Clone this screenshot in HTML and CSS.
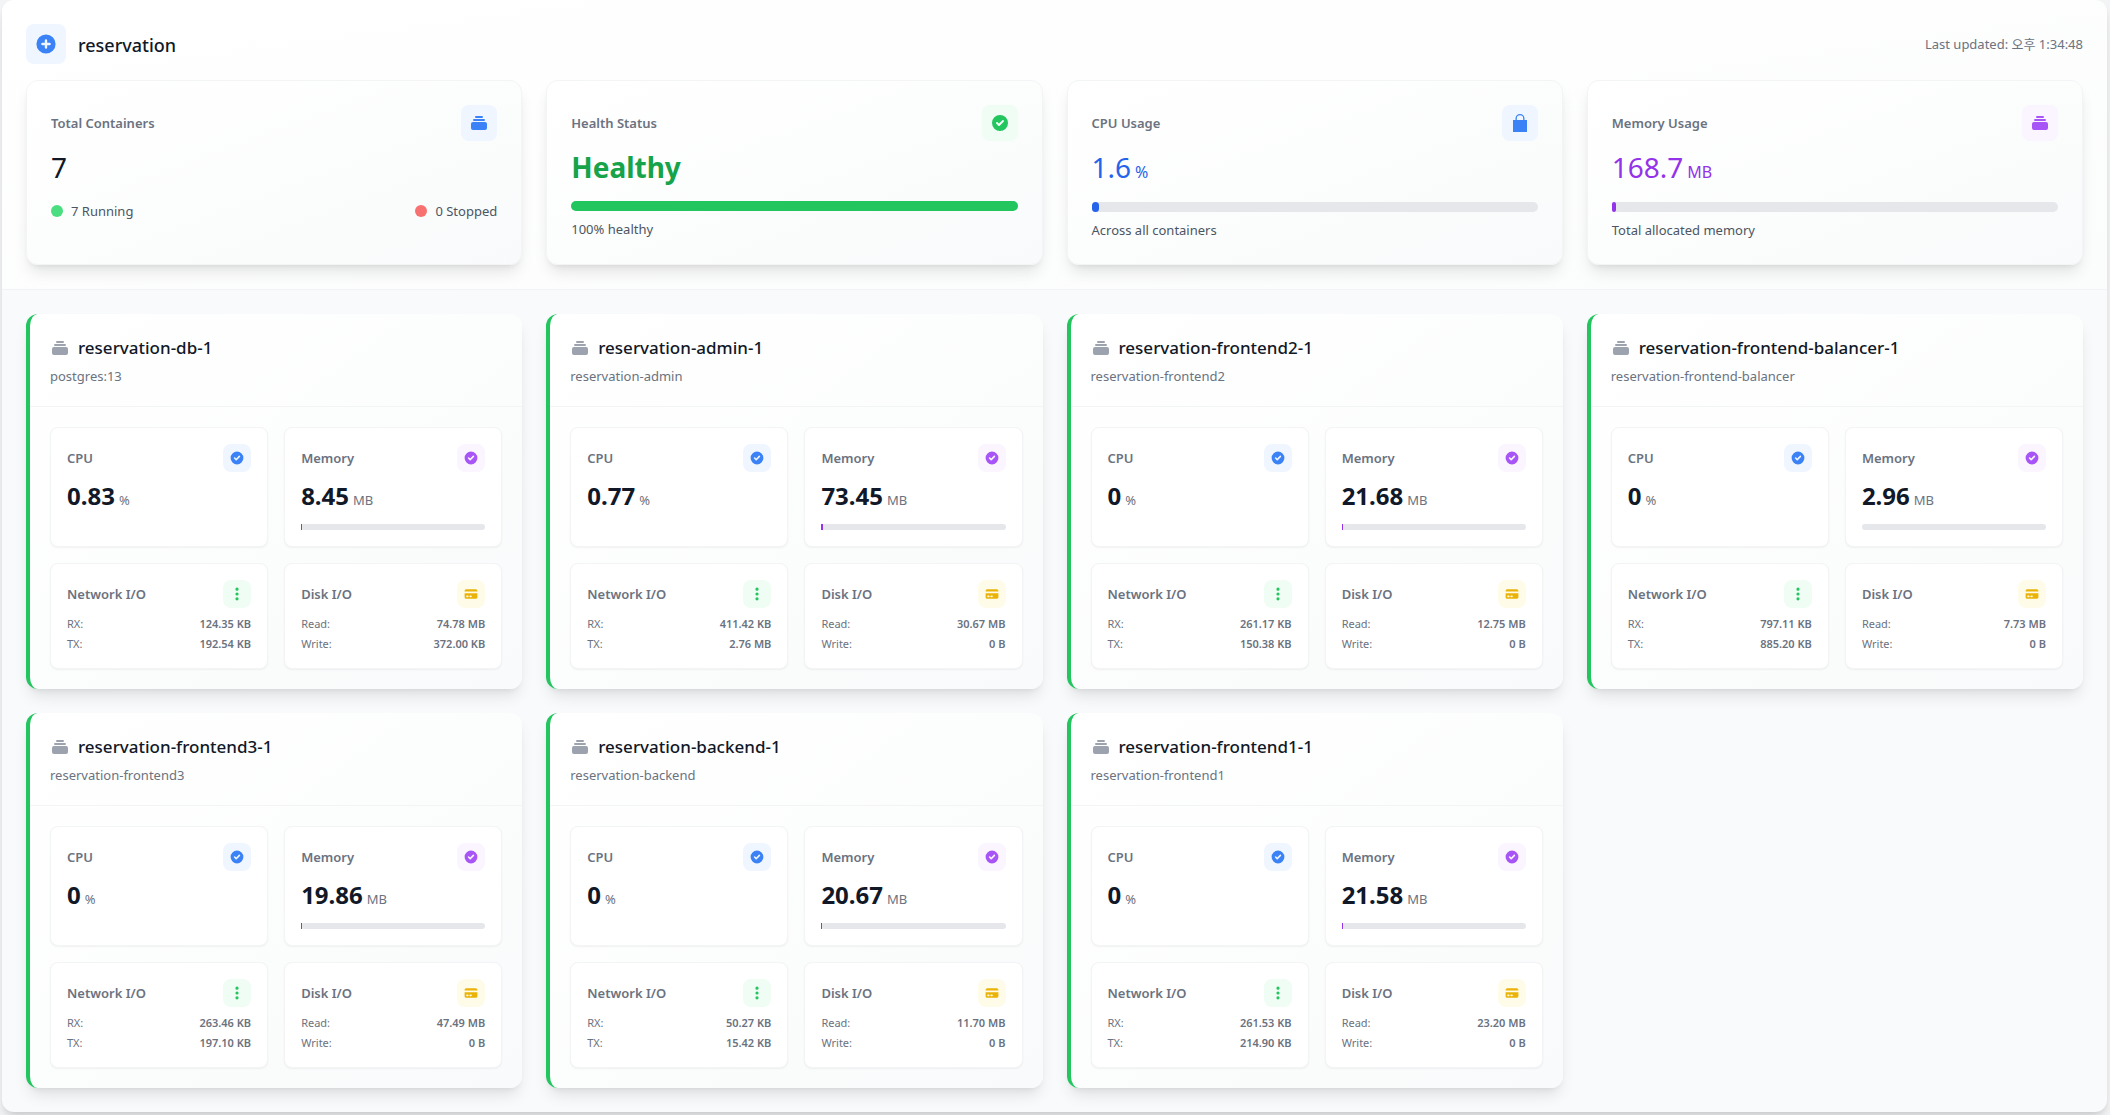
FILE: index.html
```html
<!DOCTYPE html>
<html lang="en">
<head>
<meta charset="utf-8">
<title>reservation</title>
<link rel="stylesheet" href="styles.css">
</head>
<body>
<svg class="sprite" aria-hidden="true">
  <symbol id="i-stack" viewBox="0 0 20 20"><path d="M7 3a1 1 0 000 2h6a1 1 0 100-2H7zM4 7a1 1 0 011-1h10a1 1 0 110 2H5a1 1 0 01-1-1zM2 11a2 2 0 012-2h12a2 2 0 012 2v4a2 2 0 01-2 2H4a2 2 0 01-2-2v-4z"/></symbol>
  <symbol id="i-check" viewBox="0 0 20 20"><path fill-rule="evenodd" d="M10 18a8 8 0 100-16 8 8 0 000 16zm3.707-9.293a1 1 0 00-1.414-1.414L9 10.586 7.707 9.293a1 1 0 00-1.414 1.414l2 2a1 1 0 001.414 0l4-4z"/></symbol>
  <symbol id="i-plus" viewBox="0 0 20 20"><path fill-rule="evenodd" d="M10 18a8 8 0 100-16 8 8 0 000 16zm1-11a1 1 0 10-2 0v2H7a1 1 0 100 2h2v2a1 1 0 102 0v-2h2a1 1 0 100-2h-2V7z"/></symbol>
  <symbol id="i-bag" viewBox="0 0 20 20"><path fill-rule="evenodd" d="M10 1a4.5 4.5 0 00-4.500 4.500V7H3v12h14V7h-2.500V5.500A4.500 4.500 0 0010 1zm3.200 6V5.500a3.200 3.200 0 00-6.400 0V7h6.400z"/></symbol>
  <symbol id="i-dots" viewBox="0 0 20 20"><path d="M10 6a2 2 0 110-4 2 2 0 010 4zM10 12a2 2 0 110-4 2 2 0 010 4zM10 18a2 2 0 110-4 2 2 0 010 4z"/></symbol>
  <symbol id="i-card" viewBox="0 0 20 20"><path fill-rule="evenodd" d="M4 4a2 2 0 00-2 2v1h16V6a2 2 0 00-2-2H4zM18 9H2v5a2 2 0 002 2h12a2 2 0 002-2V9zM4 13a1 1 0 011-1h1a1 1 0 110 2H5a1 1 0 01-1-1zm5-1a1 1 0 100 2h1a1 1 0 100-2H9z"/></symbol>
</svg>
<main class="panel">
  <header class="overview">
    <div class="topbar">
      <span class="badge badge-lg blue"><svg><use href="#i-plus"/></svg></span>
      <h1>reservation</h1>
      <p class="updated">Last updated: 오후 1:34:48</p>
    </div>
    <div class="grid">
      <section class="summary">
        <div class="head"><h2>Total Containers</h2><span class="badge badge-md blue"><svg><use href="#i-stack"/></svg></span></div>
        <p class="figure">7</p>
        <div class="states"><span class="state up">7 Running</span><span class="state down">0 Stopped</span></div>
      </section>
      <section class="summary">
        <div class="head"><h2>Health Status</h2><span class="badge badge-md green"><svg><use href="#i-check"/></svg></span></div>
        <p class="figure healthy">Healthy</p>
        <div class="bar"><div class="fill fill-green" style="width:100%"></div></div>
        <p class="note">100% healthy</p>
      </section>
      <section class="summary">
        <div class="head"><h2>CPU Usage</h2><span class="badge badge-md blue"><svg><use href="#i-bag"/></svg></span></div>
        <p class="figure figure-unit cpu">1.6<span>%</span></p>
        <div class="bar"><div class="fill fill-blue" style="width:1.6%"></div></div>
        <p class="note">Across all containers</p>
      </section>
      <section class="summary">
        <div class="head"><h2>Memory Usage</h2><span class="badge badge-md purple"><svg><use href="#i-stack"/></svg></span></div>
        <p class="figure figure-unit memory">168.7<span>MB</span></p>
        <div class="bar"><div class="fill fill-purple" style="width:0.9%"></div></div>
        <p class="note">Total allocated memory</p>
      </section>
    </div>
  </header>
  <div class="grid containers" id="containers"></div>
</main>
<script src="app.js"></script>
</body>
</html>
```
FILE: app.js
```js
const containers = [
  ["reservation-db-1", "postgres:13", "0.83", "8.45", 0.5, "124.35 KB", "192.54 KB", "74.78 MB", "372.00 KB"],
  ["reservation-admin-1", "reservation-admin", "0.77", "73.45", 1, "411.42 KB", "2.76 MB", "30.67 MB", "0 B"],
  ["reservation-frontend2-1", "reservation-frontend2", "0", "21.68", 0.5, "261.17 KB", "150.38 KB", "12.75 MB", "0 B"],
  ["reservation-frontend-balancer-1", "reservation-frontend-balancer", "0", "2.96", 0, "797.11 KB", "885.20 KB", "7.73 MB", "0 B"],
  ["reservation-frontend3-1", "reservation-frontend3", "0", "19.86", 0.5, "263.46 KB", "197.10 KB", "47.49 MB", "0 B"],
  ["reservation-backend-1", "reservation-backend", "0", "20.67", 0.5, "50.27 KB", "15.42 KB", "11.70 MB", "0 B"],
  ["reservation-frontend1-1", "reservation-frontend1", "0", "21.58", 0.5, "261.53 KB", "214.90 KB", "23.20 MB", "0 B"],
];

const head = (label, color, icon) =>
  `<div class="head"><h3>${label}</h3><span class="badge badge-sm ${color}"><svg><use href="#${icon}"/></svg></span></div>`;
const pair = (label, value) => `<div class="pair"><dt>${label}:</dt><dd>${value}</dd></div>`;

document.getElementById("containers").innerHTML = containers.map(
  ([name, image, cpu, memory, share, rx, tx, read, write]) => `
  <article class="container">
    <header class="container-head">
      <h2><svg><use href="#i-stack"/></svg>${name}</h2>
      <p>${image}</p>
    </header>
    <div class="tiles">
      <section class="tile">${head("CPU", "blue", "i-check")}<p class="value">${cpu}<span>%</span></p></section>
      <section class="tile">${head("Memory", "purple", "i-check")}<p class="value">${memory}<span>MB</span></p>
        <div class="bar bar-sm"><div class="fill fill-purple" style="width:${share}%"></div></div></section>
      <section class="tile">${head("Network I/O", "green", "i-dots")}<dl>${pair("RX", rx)}${pair("TX", tx)}</dl></section>
      <section class="tile">${head("Disk I/O", "yellow", "i-card")}<dl>${pair("Read", read)}${pair("Write", write)}</dl></section>
    </div>
  </article>`).join("");
```
FILE: styles.css
```css
* { box-sizing: border-box; }
body {
  margin: 0;
  padding: 0 3px 3px 2px;
  background: #f3f4f6;
  color: #111827;
  font-family: "Noto Sans", "Noto Sans CJK KR", sans-serif;
  font-size: 13px;
  line-height: 20px;
}
h1, h2, h3, p, dl, dd { margin: 0; }
.sprite { display: none; }
svg { display: block; fill: currentColor; }

.panel {
  border-radius: 12px;
  overflow: hidden;
  background: #f8fafc;
  box-shadow: 0 10px 15px -3px rgba(0, 0, 0, .1), 0 4px 6px -2px rgba(0, 0, 0, .1);
}
.overview {
  padding: 24px;
  border-bottom: 1px solid #f1f3f5;
  background: linear-gradient(to bottom right, #fff, #fbfcfc);
}
.topbar { display: flex; align-items: center; margin-bottom: 16px; }
.topbar h1 { margin-left: 12px; padding-top: 2px; font-size: 18px; line-height: 28px; font-weight: 500; }
.updated { margin-left: auto; color: #6b7280; }

.grid { display: grid; grid-template-columns: repeat(4, minmax(0, 1fr)); gap: 24px; }
.containers { padding: 24px; }

.badge { display: flex; align-items: center; justify-content: center; border-radius: 8px; }
.badge-lg { width: 40px; height: 40px; }
.badge-lg svg { width: 24px; height: 24px; }
.badge-md { width: 36px; height: 36px; }
.badge-md svg { width: 20px; height: 20px; }
.badge-sm { width: 28px; height: 28px; }
.badge-sm svg { width: 16px; height: 16px; }
.blue { background: #eff6ff; color: #3b82f6; }
.green { background: #f0fdf4; color: #22c55e; }
.purple { background: #faf5ff; color: #a855f7; }
.yellow { background: #fefce8; color: #eab308; }

.summary, .container {
  border-radius: 12px;
  background: linear-gradient(to bottom right, #fff, #fbfdfc 60%, #f8fafc);
  box-shadow: 0 10px 15px -3px rgba(0, 0, 0, .1), 0 4px 6px -4px rgba(0, 0, 0, .1);
}
.summary { padding: 24px; border: 1px solid #f3f4f6; }
.head { display: flex; align-items: center; justify-content: space-between; margin-bottom: 8px; }
.head h2, .head h3 { color: #6b7280; font-size: 13px; line-height: 20px; font-weight: 600; }
.figure { font-size: 28px; line-height: 36px; }
.figure-unit { line-height: 37px; }
.figure span { margin-left: 4px; font-size: 16px; line-height: 16px; }
.healthy { color: #16a34a; font-weight: 700; }
.cpu { color: #2563eb; }
.memory { color: #9333ea; }
.note { margin-top: 8px; color: #4b5563; }
.states { display: flex; justify-content: space-between; margin-top: 16px; color: #4b5563; }
.state { display: flex; align-items: center; gap: 8px; }
.state::before { content: ""; width: 12px; height: 12px; border-radius: 50%; }
.up::before { background: #4ade80; }
.down::before { background: #f87171; }

.bar { height: 10px; margin-top: 16px; border-radius: 5px; background: #e5e7eb; }
.bar-sm { height: 6px; margin-top: 12px; border-radius: 3px; }
.fill { height: 100%; border-radius: 5px; }
.bar-sm .fill { border-radius: 0; }
.fill-green { background: #22c55e; }
.fill-blue { background: #2563eb; }
.fill-purple { background: #9333ea; }

.container { border-left: 4px solid #22c55e; }
.container-head { padding: 20px; border-bottom: 1px solid #f3f4f6; }
.container-head h2 { display: flex; align-items: center; gap: 8px; font-size: 17px; line-height: 28px; font-weight: 500; }
.container-head svg { width: 20px; height: 20px; color: #9ca3af; }
.container-head p { margin-top: 4px; color: #6b7280; }
.tiles { display: grid; grid-template-columns: repeat(2, minmax(0, 1fr)); gap: 16px; padding: 20px; }
.tile {
  padding: 16px;
  border: 1px solid #f3f4f6;
  border-radius: 8px;
  background: #fff;
  box-shadow: 0 1px 2px rgba(0, 0, 0, .05);
}
.value { font-size: 24px; line-height: 32px; font-weight: 700; }
.value span { margin-left: 4px; color: #6b7280; font-size: 13px; line-height: 16px; font-weight: 400; }
.tile dl { display: grid; gap: 4px; color: #6b7280; font-size: 11px; line-height: 16px; }
.pair { display: flex; justify-content: space-between; }
.pair dd { font-weight: 600; }
```
